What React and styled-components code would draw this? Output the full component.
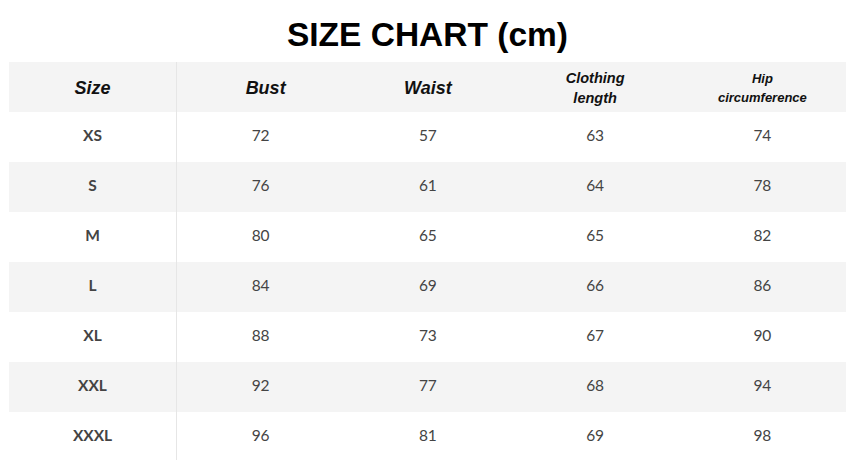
import React from 'react'
import styled, { createGlobalStyle } from 'styled-components'

const GlobalStyle = createGlobalStyle`
  html, body {
    margin: 0;
    padding: 0;
    background: #fff;
  }
`

const Page = styled.div`
  width: 855px;
  height: 460px;
  overflow: hidden;
  background: #fff;
  padding: 0 9px 0 9px;
  box-sizing: border-box;
`

const Title = styled.h1`
  margin: 0;
  height: 62px;
  display: flex;
  align-items: center;
  justify-content: center;
  font-family: "Liberation Sans", Arial, sans-serif;
  font-weight: bold;
  font-size: 33.5px;
  color: #000;
  padding-top: 7px;
  box-sizing: border-box;
`

const Table = styled.div`
  display: grid;
  grid-template-columns: 168px repeat(4, 1fr);
  width: 837px;
`

const Row = styled.div`
  display: contents;
`

const Cell = styled.div`
  height: 50px;
  display: flex;
  align-items: center;
  justify-content: center;
  text-align: center;
  background: ${p => (p.shaded ? '#f4f4f4' : '#fff')};
  border-right: ${p => (p.divider ? '1px solid #e6e6e6' : 'none')};
  font-family: Lato, "Open Sans", sans-serif;
  font-size: 15.5px;
  color: #444;
  font-weight: ${p => (p.bold ? 700 : 400)};
  padding-bottom: 4px;
  box-sizing: border-box;
`

const HeadCell = styled(Cell)`
  font-family: "Liberation Sans", Arial, sans-serif;
  font-style: italic;
  font-weight: bold;
  color: #111;
  font-size: ${p => p.size || 18}px;
  line-height: ${p => (p.size ? p.size + 6 : 22)}px;
  padding-bottom: 0;
  padding-top: 2px;
  padding-left: ${p => p.shift || 0}px;
`

const headers = [
  { label: 'Size' },
  { label: 'Bust', shift: 10 },
  { label: 'Waist' },
  { label: ['Clothing', 'length'], size: 14.5 },
  { label: ['Hip', 'circumference'], size: 13 }
]

const rows = [
  ['XS', 72, 57, 63, 74],
  ['S', 76, 61, 64, 78],
  ['M', 80, 65, 65, 82],
  ['L', 84, 69, 66, 86],
  ['XL', 88, 73, 67, 90],
  ['XXL', 92, 77, 68, 94],
  ['XXXL', 96, 81, 69, 98]
]

export default function App () {
  return (
    <Page>
      <GlobalStyle />
      <Title>SIZE CHART (cm)</Title>
      <Table>
        <Row>
          {headers.map((h, i) => (
            <HeadCell key={i} shaded divider={i === 0} size={h.size} shift={h.shift}>
              {Array.isArray(h.label)
                ? <span>{h.label[0]}<br />{h.label[1]}</span>
                : h.label}
            </HeadCell>
          ))}
        </Row>
        {rows.map((r, ri) => (
          <Row key={r[0]}>
            {r.map((v, ci) => (
              <Cell
                key={ci}
                shaded={ri % 2 === 1}
                divider={ci === 0}
                bold={ci === 0}
              >
                {v}
              </Cell>
            ))}
          </Row>
        ))}
      </Table>
    </Page>
  )
}
